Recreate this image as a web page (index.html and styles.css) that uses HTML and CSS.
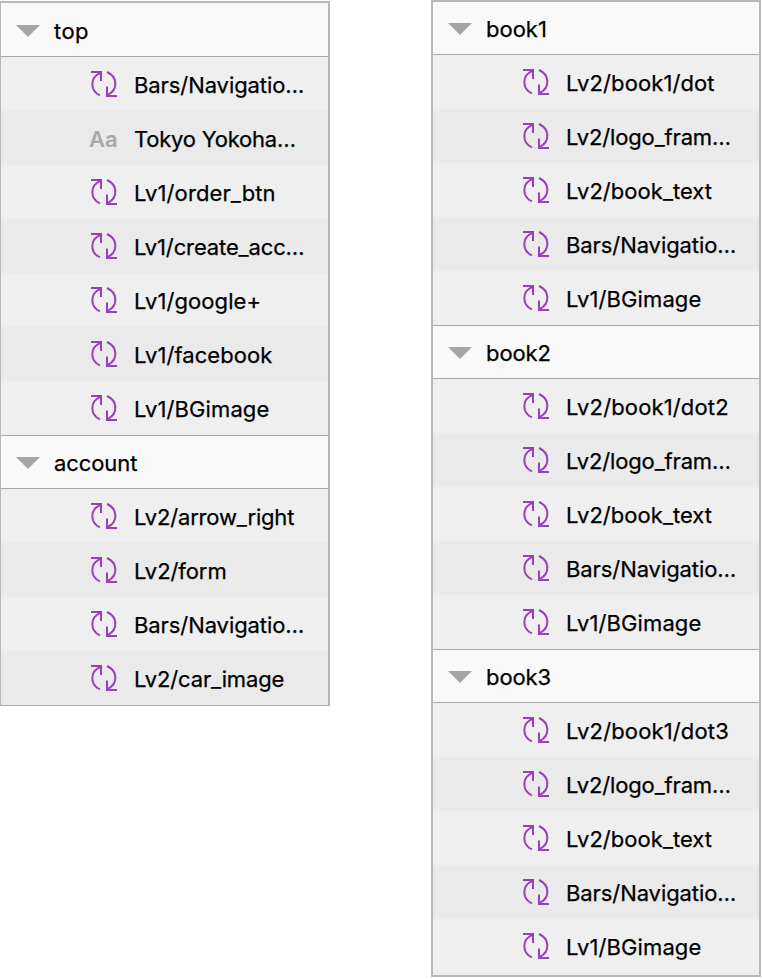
FILE: index.html
```
<!DOCTYPE html>
<html lang="en">
<head>
<meta charset="utf-8">
<title>Layers</title>
<link rel="stylesheet" href="styles.css">
<script src="layers.js" defer></script>
</head>
<body>
<main class="board">
  <section class="panel panel-left" id="left"></section>
  <section class="panel panel-right" id="right"></section>
</main>
</body>
</html>
```
FILE: layers.js
```
const symbolIcon = `<svg class="icon" viewBox="0 0 28 28" aria-hidden="true">
  <path d="M1 2H11V11M10 3.2C-.2 7.5 -.2 20.8 10 25.4M17 2C28 6.8 28 19.8 18 24.9M17 16.5V26H27"/></svg>`;
const textIcon = '<span class="icon text-icon">Aa</span>';

const panels = {
  left: [
    ["top", ["Bars/Navigatio…", "Tokyo Yokoha…", "Lv1/order_btn", "Lv1/create_acc…", "Lv1/google+", "Lv1/facebook", "Lv1/BGimage"]],
    ["account", ["Lv2/arrow_right", "Lv2/form", "Bars/Navigatio…", "Lv2/car_image"]],
  ],
  right: [
    ["book1", ["Lv2/book1/dot", "Lv2/logo_fram…", "Lv2/book_text", "Bars/Navigatio…", "Lv1/BGimage"]],
    ["book2", ["Lv2/book1/dot2", "Lv2/logo_fram…", "Lv2/book_text", "Bars/Navigatio…", "Lv1/BGimage"]],
    ["book3", ["Lv2/book1/dot3", "Lv2/logo_fram…", "Lv2/book_text", "Bars/Navigatio…", "Lv1/BGimage"]],
  ],
};

// Letter spacing, in pixels, for names set wider or tighter than the default.
const tracking = {
  "top": 0.4,
  "book1": 0,
  "Tokyo Yokoha…": -0.22,
  "Lv1/order_btn": 0.1,
  "Lv1/create_acc…": -0.13,
  "Lv1/google+": 0.08,
  "Lv1/facebook": 0.05,
  "Lv1/BGimage": 0.1,
  "Lv2/arrow_right": -0.17,
  "Lv2/car_image": -0.15,
  "Lv2/book1/dot": 0.1,
  "Lv2/book1/dot2": 0.14,
  "Lv2/book1/dot3": 0.14,
  "Lv2/book_text": 0.04,
  "Lv2/logo_fram…": -0.15,
};
const label = name =>
  `<span class="label"${name in tracking ? ` style="letter-spacing:${tracking[name]}px"` : ""}>${name}</span>`;

for (const [id, groups] of Object.entries(panels)) {
  document.getElementById(id).innerHTML = groups.map(([name, rows]) => `
    <div class="group">
      <h2 class="header"><svg class="arrow" viewBox="0 0 24 12"><path d="M0 0H24L12 12Z"/></svg>${label(name)}</h2>
      <ul class="rows">${rows.map(r => `<li class="row">${r.startsWith("Tokyo") ? textIcon : symbolIcon}${label(r)}</li>`).join("")}</ul>
    </div>`).join("");
}
```
FILE: styles.css
```
* { box-sizing: border-box; }
body {
  margin: 0;
  background: #fff;
  color: #000;
  font-family: Inter, "Liberation Sans", sans-serif;
  font-size: 22px;
  font-feature-settings: "calt" 0;
}
.board {
  display: flex;
  align-items: flex-start;
  height: 979px;
}
.panel {
  width: 330px;
  border: 2px solid #b7b7b7;
  background: #ededed;
}
.panel-left {
  margin-top: 1px;
  border-left-width: 1px;
  border-bottom: 1px solid #a8a8a8;
}
.panel-right {
  height: 977px;
  margin-left: 101px;
}
.header {
  display: flex;
  align-items: center;
  height: 54px;
  margin: 0;
  padding: 2px 0 0 15px;
  border: solid #a8a8a8;
  border-width: 1px 0;
  background: #f9f9f9;
  font-size: inherit;
  font-weight: 400;
}
.group:first-child .header { border-top: 0; }
.panel-right .group:first-child .header { height: 53px; }
.arrow {
  width: 24px;
  height: 12px;
  margin-right: 14px;
  fill: #a5a5a5;
}
.rows { margin: 0; padding: 0; list-style: none; }
.row {
  display: flex;
  align-items: center;
  height: 54px;
  padding-left: 89px;
  background: #efefef;
}
.row:nth-child(even) { background: #eaeaea; }
.icon {
  width: 28px;
  height: 28px;
  margin-right: 16px;
  fill: none;
  stroke: #983fbd;
  stroke-width: 2;
}
.text-icon {
  margin: 2px 17px 0 -1px;
  color: #a8a8a8;
  font-weight: 600;
  line-height: 28px;
  letter-spacing: 0;
}
.label {
  line-height: 28px;
  white-space: nowrap;
  letter-spacing: -.08px;
  -webkit-text-stroke: .25px #000;
}
.row .label { padding-top: 2px; }
```
